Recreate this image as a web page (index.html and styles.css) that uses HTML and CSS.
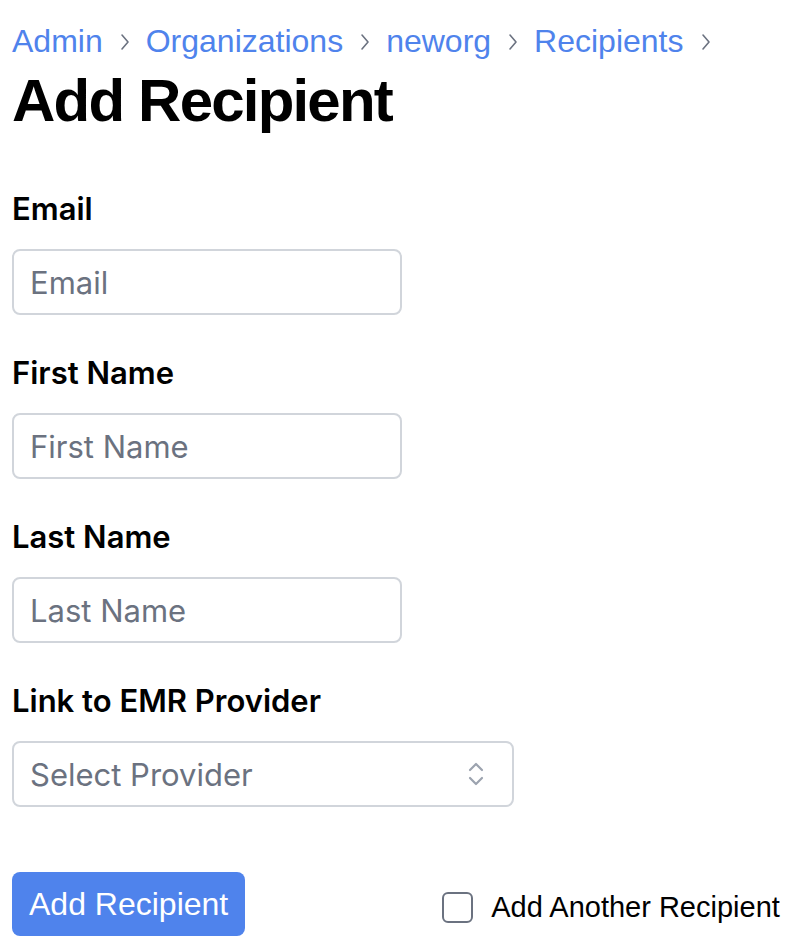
FILE: index.html
```html
<!DOCTYPE html>
<html lang="en">
<head>
  <meta charset="UTF-8">
  <meta name="viewport" content="width=device-width, initial-scale=1.0">
  <title>Add Recipient</title>
  <link rel="stylesheet" href="styles.css">
</head>
<body>
  <div class="page">
    <nav class="breadcrumb">
      <a href="#">Admin</a>
      <svg class="sep" viewBox="0 0 10 18" width="10" height="18"><path d="M2 2l6 7-6 7" fill="none" stroke="#6b7280" stroke-width="1.6" stroke-linecap="round" stroke-linejoin="round"/></svg>
      <a href="#">Organizations</a>
      <svg class="sep" viewBox="0 0 10 18" width="10" height="18"><path d="M2 2l6 7-6 7" fill="none" stroke="#6b7280" stroke-width="1.6" stroke-linecap="round" stroke-linejoin="round"/></svg>
      <a href="#">neworg</a>
      <svg class="sep" viewBox="0 0 10 18" width="10" height="18"><path d="M2 2l6 7-6 7" fill="none" stroke="#6b7280" stroke-width="1.6" stroke-linecap="round" stroke-linejoin="round"/></svg>
      <a href="#">Recipients</a>
      <svg class="sep" viewBox="0 0 10 18" width="10" height="18"><path d="M2 2l6 7-6 7" fill="none" stroke="#6b7280" stroke-width="1.6" stroke-linecap="round" stroke-linejoin="round"/></svg>
    </nav>
    <h1>Add Recipient</h1>

    <form class="form">
      <div class="field">
        <label for="email">Email</label>
        <input id="email" type="email" placeholder="Email">
      </div>
      <div class="field">
        <label for="first">First Name</label>
        <input id="first" type="text" placeholder="First Name">
      </div>
      <div class="field">
        <label for="last">Last Name</label>
        <input id="last" type="text" placeholder="Last Name">
      </div>
      <div class="field">
        <label for="provider">Link to EMR Provider</label>
        <div class="select">
          <span>Select Provider</span>
          <svg viewBox="0 0 20 28" width="20" height="28"><path d="M4 10l6-6 6 6M4 18l6 6 6-6" fill="none" stroke="#9ca3af" stroke-width="2.2" stroke-linecap="round" stroke-linejoin="round"/></svg>
        </div>
      </div>

      <div class="actions">
        <button type="button" class="submit">Add Recipient</button>
        <label class="another">
          <span class="box"></span>
          Add Another Recipient
        </label>
      </div>
    </form>
  </div>
</body>
</html>
```

FILE: styles.css
```css
body {
  margin: 0;
  background: #ffffff;
  color: #000000;
  font-family: "Liberation Sans", Arial, sans-serif;
}

.page {
  padding: 22px 12px 0 12px;
}

.breadcrumb {
  display: flex;
  align-items: center;
  font-size: 32px;
  line-height: 38px;
}

.breadcrumb a {
  color: #4f83ec;
  text-decoration: none;
}

.breadcrumb .sep {
  margin: 2px 16px 0 17px;
}

h1 {
  margin: 5px 0 0 0;
  font-size: 60px;
  line-height: 72px;
  font-weight: bold;
  letter-spacing: -1.8px;
}

.form {
  margin-top: 53px;
}

.field {
  display: flex;
  flex-direction: column;
  align-items: flex-start;
  margin-bottom: 39px;
}

.field label {
  font-family: Inter, "Noto Sans", sans-serif;
  font-size: 31px;
  font-weight: 600;
  line-height: 38px;
  margin-bottom: 21px;
}

.field input,
.select {
  box-sizing: border-box;
  height: 66px;
  border: 2px solid #d1d5db;
  border-radius: 8px;
  padding: 0 16px;
  font-family: Inter, "Noto Sans", sans-serif;
  font-size: 31px;
  color: #111827;
  background: #ffffff;
}

.field input {
  width: 390px;
}

.field input::placeholder {
  color: #6b7280;
}

.select {
  width: 502px;
  display: flex;
  align-items: center;
  justify-content: space-between;
  color: #6b7280;
  padding-right: 26px;
}

.actions {
  display: flex;
  align-items: center;
  margin-top: 65px;
  white-space: nowrap;
}

.submit {
  flex-shrink: 0;
  background: #4f83ec;
  color: #ffffff;
  border: none;
  border-radius: 8px;
  height: 64px;
  padding: 0 17px;
  font-family: "Liberation Sans", Arial, sans-serif;
  font-size: 32px;
}

.another {
  flex-shrink: 0;
  display: flex;
  align-items: center;
  margin-left: 197px;
  margin-top: 6px;
  font-size: 29px;
}

.box {
  box-sizing: border-box;
  width: 31px;
  height: 31px;
  border: 2px solid #6b7280;
  border-radius: 6px;
  margin-right: 18px;
}
```
